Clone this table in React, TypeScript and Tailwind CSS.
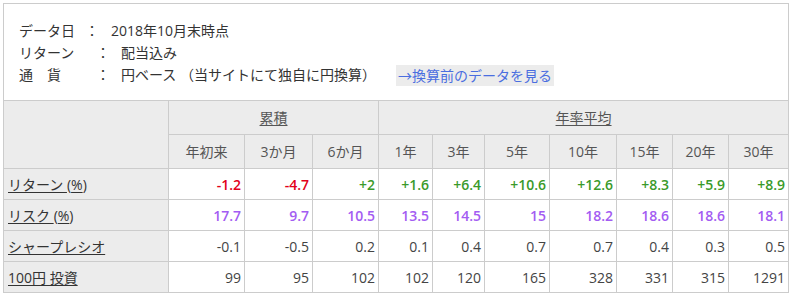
import React from 'react';

type Tone = 'red' | 'green' | 'purple' | 'plain';

const toneClass: Record<Tone, string> = {
  red: 'text-[#e2001a] font-semibold',
  green: 'text-[#3a9a2a] font-semibold',
  purple: 'text-[#a35cf2] font-semibold',
  plain: 'text-[#444]',
};

const colWidths = [165, 76, 68, 66, 54, 52, 65, 67, 56, 56, 60];
const periods = ['年初来', '3か月', '6か月', '1年', '3年', '5年', '10年', '15年', '20年', '30年'];

const returns = ['-1.2', '-4.7', '+2', '+1.6', '+6.4', '+10.6', '+12.6', '+8.3', '+5.9', '+8.9'];
const risks = ['17.7', '9.7', '10.5', '13.5', '14.5', '15', '18.2', '18.6', '18.6', '18.1'];
const sharpe = ['-0.1', '-0.5', '0.2', '0.1', '0.4', '0.7', '0.7', '0.4', '0.3', '0.5'];
const invest = ['99', '95', '102', '102', '120', '165', '328', '331', '315', '1291'];

const toneOf = (v: string): Tone => (v.startsWith('-') ? 'red' : 'green');

const Row: React.FC<{ label: React.ReactNode; values: string[]; tone?: (v: string) => Tone }> = ({
  label,
  values,
  tone,
}) => (
  <tr>
    <td className="h-[31px] border border-[#ccc] bg-[#ececec] pl-1 text-left text-[#333]">{label}</td>
    {values.map((v, i) => (
      <td key={i} className={`border border-[#ccc] bg-white pr-[3px] text-right ${toneClass[tone ? tone(v) : 'plain']}`}>
        {v}
      </td>
    ))}
  </tr>
);

const App: React.FC = () => {
  return (
    <div
      className="m-[3px] w-[786px] text-[14px] text-[#333]"
      style={{ fontFamily: '"Open Sans", "Noto Sans CJK JP", sans-serif' }}
    >
      {/* 基準情報 */}
      <div className="border border-[#ccc] bg-white px-[15px] pt-[16px] pb-[14px] leading-[22px]">
        <div className="flex">
          <span className="w-[56px]">データ日</span>
          <span className="w-[36px] pl-[10px]">：</span>
          <span>2018年10月末時点</span>
        </div>
        <div className="flex">
          <span className="w-[70px]">リターン</span>
          <span className="w-[32px] pl-[7px]">：</span>
          <span>配当込み</span>
        </div>
        <div className="flex items-center">
          <span className="w-[70px]">通　貨</span>
          <span className="w-[32px] pl-[7px]">：</span>
          <span className="whitespace-pre">円ベース （当サイトにて独自に円換算）</span>
          <a className="ml-[20px] bg-[#ececec] px-[2px] leading-[21px] text-[#4a6ee0]" href="#">
            →換算前のデータを見る
          </a>
        </div>
      </div>

      {/* パフォーマンス表 */}
      <table className="-mt-px w-[786px] table-fixed border-collapse border border-[#ccc]">
        <colgroup>
          {colWidths.map((w, i) => (
            <col key={i} style={{ width: w }} />
          ))}
        </colgroup>
        <thead className="bg-[#ececec] text-[#555]">
          <tr>
            <th rowSpan={2} className="border border-[#ccc] font-normal"></th>
            <th colSpan={3} className="h-[34px] border border-[#ccc] font-normal">
              <span className="underline underline-offset-2">累積</span>
            </th>
            <th colSpan={7} className="border border-[#ccc] font-normal">
              <span className="underline underline-offset-2">年率平均</span>
            </th>
          </tr>
          <tr>
            {periods.map((p) => (
              <th key={p} className="h-[34px] border border-[#ccc] font-normal">
                {p}
              </th>
            ))}
          </tr>
        </thead>
        <tbody>
          <Row
            label={
              <>
                <span className="underline underline-offset-2">リターン </span>(<span className="underline underline-offset-2">%</span>)
              </>
            }
            values={returns}
            tone={toneOf}
          />
          <Row
            label={
              <>
                <span className="underline underline-offset-2">リスク </span>(<span className="underline underline-offset-2">%</span>)
              </>
            }
            values={risks}
            tone={() => 'purple'}
          />
          <Row label={<span className="underline underline-offset-2">シャープレシオ</span>} values={sharpe} />
          <Row label={<span className="underline underline-offset-2">100円 投資</span>} values={invest} />
        </tbody>
      </table>
    </div>
  );
};

export default App;
